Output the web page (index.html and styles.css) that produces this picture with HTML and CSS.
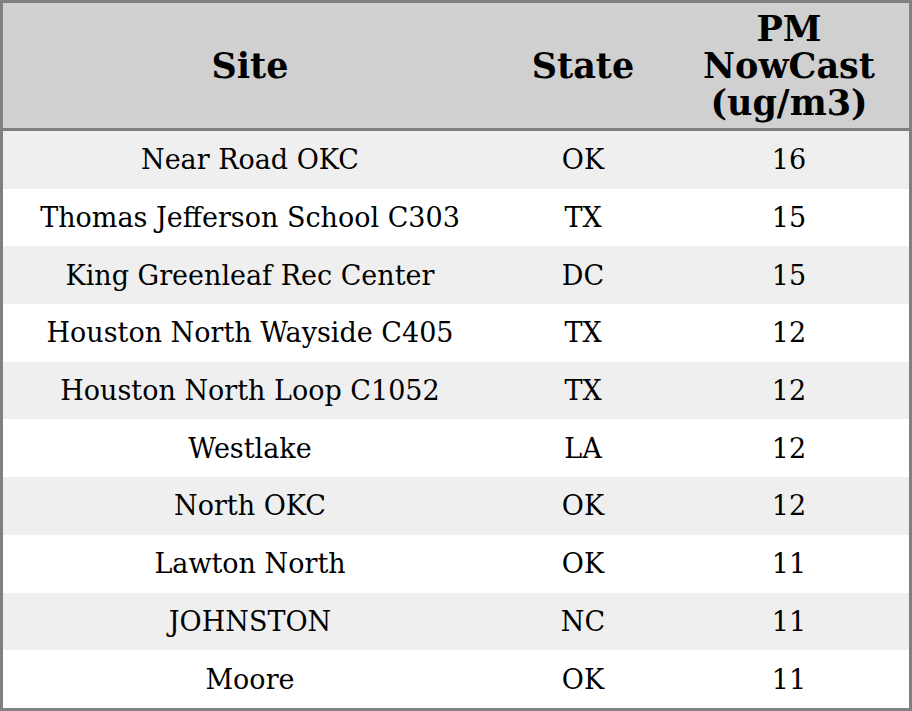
FILE: index.html
```html
<!DOCTYPE html>
<html>
<head>
<meta charset="utf-8">
<link rel="stylesheet" href="styles.css">
</head>
<body>
<table class="aq-table">
  <colgroup>
    <col class="col-site">
    <col class="col-state">
    <col class="col-pm">
  </colgroup>
  <thead>
    <tr>
      <th>Site</th>
      <th>State</th>
      <th>PM<br>NowCast<br>(ug/m3)</th>
    </tr>
  </thead>
  <tbody>
    <tr><td>Near Road OKC</td><td>OK</td><td>16</td></tr>
    <tr><td>Thomas Jefferson School C303</td><td>TX</td><td>15</td></tr>
    <tr><td>King Greenleaf Rec Center</td><td>DC</td><td>15</td></tr>
    <tr><td>Houston North Wayside C405</td><td>TX</td><td>12</td></tr>
    <tr><td>Houston North Loop C1052</td><td>TX</td><td>12</td></tr>
    <tr><td>Westlake</td><td>LA</td><td>12</td></tr>
    <tr><td>North OKC</td><td>OK</td><td>12</td></tr>
    <tr><td>Lawton North</td><td>OK</td><td>11</td></tr>
    <tr><td>JOHNSTON</td><td>NC</td><td>11</td></tr>
    <tr><td>Moore</td><td>OK</td><td>11</td></tr>
  </tbody>
</table>
</body>
</html>
```

FILE: styles.css
```css
html, body {
  margin: 0;
  padding: 0;
  background: #ffffff;
}

.aq-table {
  width: 912px;
  border-collapse: separate;
  border-spacing: 0;
  border: 3px solid #808080;
  font-family: "DejaVu Serif", serif;
  color: #000000;
  table-layout: fixed;
}

.col-site { width: 494px; }
.col-state { width: 172px; }
.col-pm { width: 240px; }

.aq-table th {
  background: #d0d0d0;
  font-weight: bold;
  font-size: 35px;
  line-height: 37px;
  padding: 7px 0 7px 0;
  text-align: center;
  vertical-align: middle;
  border-bottom: 3px solid #808080;
}

.aq-table td {
  font-size: 27px;
  line-height: 31px;
  padding: 13.35px 0;
  text-align: center;
  vertical-align: middle;
}

.aq-table tbody tr:nth-child(odd) td {
  background: #efefef;
}

.aq-table tbody tr:nth-child(even) td {
  background: #ffffff;
}
```
